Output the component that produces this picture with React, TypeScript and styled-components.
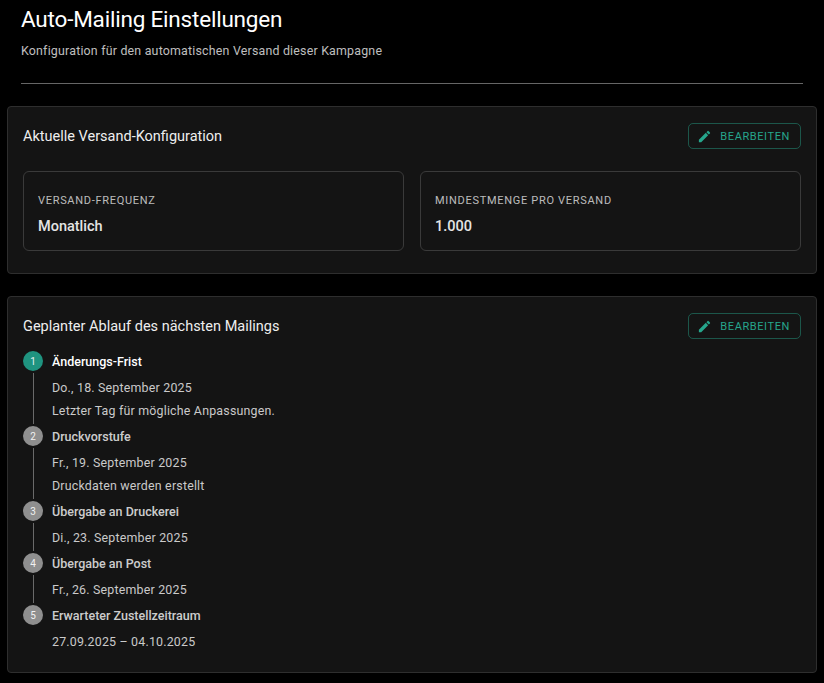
import React from "react";
import styled, { createGlobalStyle } from "styled-components";

const Global = createGlobalStyle`
  html, body { margin: 0; background: #000; }
  body { font-family: Roboto, "Liberation Sans", sans-serif; color: #fff; }
`;

const Page = styled.div`
  padding: 0 7px 8px 7px;
  display: flex;
  flex-direction: column;
  gap: 22px;
`;

const Header = styled.div`
  padding: 4px 14px 0 14px;
`;

const Title = styled.h1`
  margin: 0;
  font-size: 22.5px;
  font-weight: 400;
  line-height: 30px;
  letter-spacing: -0.2px;
`;

const Subtitle = styled.p`
  margin: 9px 0 0 0;
  font-size: 12.4px;
  color: rgba(255,255,255,0.75);
  letter-spacing: 0.2px;
`;

const Divider = styled.hr`
  margin: 25px 0 0 0;
  border: 0;
  border-top: 1px solid rgba(255,255,255,0.4);
`;

const Card = styled.section<{ $bottom: number }>`
  background: #141414;
  border: 1px solid #2e2e2e;
  border-radius: 4px;
  padding: 16px 15px ${p => p.$bottom}px;
`;

const CardHead = styled.div`
  display: flex;
  justify-content: space-between;
  align-items: center;
  min-height: 26px;
`;

const CardTitle = styled.h2`
  margin: 0;
  font-size: 14.5px;
  font-weight: 400;
  color: #eee;
`;

const EditButton = styled.button`
  display: flex;
  align-items: center;
  gap: 8px;
  height: 26px;
  padding: 0 10px 0 8px;
  background: transparent;
  border: 1px solid rgba(38,166,140,0.45);
  border-radius: 5px;
  color: #26a68c;
  font-family: inherit;
  font-size: 11px;
  letter-spacing: 0.6px;
`;

const Grid = styled.div`
  margin-top: 22px;
  display: grid;
  grid-template-columns: 1fr 1fr;
  gap: 16px;
`;

const InfoBox = styled.div`
  border: 1px solid #3a3a3a;
  border-radius: 6px;
  padding: 22px 14px 16px;
  height: 80px;
  box-sizing: border-box;
`;

const Label = styled.div`
  font-size: 11px;
  letter-spacing: 0.7px;
  color: rgba(255,255,255,0.72);
`;

const Value = styled.div`
  margin-top: 11px;
  font-size: 14.5px;
  font-weight: 500;
  color: #e4e4e4;
`;

const Steps = styled.div`
  margin-top: 10px;
  display: flex;
  flex-direction: column;
`;

const StepHead = styled.div`
  display: flex;
  align-items: center;
  gap: 9px;
  height: 24px;
`;

const Dot = styled.div<{ $active?: boolean }>`
  width: 20px;
  height: 20px;
  border-radius: 50%;
  background: ${p => (p.$active ? "#1f9480" : "#8f8f8f")};
  color: rgba(255,255,255,0.9);
  font-size: 10px;
  display: flex;
  align-items: center;
  justify-content: center;
`;

const StepLabel = styled.div<{ $active?: boolean }>`
  font-size: 12.5px;
  font-weight: 500;
  color: ${p => (p.$active ? "#fff" : "rgba(255,255,255,0.8)")};
`;

const StepBody = styled.div<{ $line?: boolean }>`
  margin-left: 10px;
  padding: 6px 0 5px 18px;
  border-left: 1px solid ${p => (p.$line ? "#6a6a6a" : "transparent")};
  display: flex;
  flex-direction: column;
  gap: 6px;
  font-size: 12.4px;
  color: rgba(255,255,255,0.78);
  line-height: 17px;
  letter-spacing: 0.2px;
`;

const Pencil = () => (
  <svg width="15" height="15" viewBox="0 0 24 24" fill="#26a68c">
    <path d="M3 17.25V21h3.75L17.81 9.94l-3.75-3.75L3 17.25zM20.71 7.04a.996.996 0 0 0 0-1.41l-2.34-2.34a.996.996 0 0 0-1.41 0l-1.830 1.83 3.75 3.75 1.83-1.83z" />
  </svg>
);

const steps = [
  { t: "Änderungs-Frist", lines: ["Do., 18. September 2025", "Letzter Tag für mögliche Anpassungen."] },
  { t: "Druckvorstufe", lines: ["Fr., 19. September 2025", "Druckdaten werden erstellt"] },
  { t: "Übergabe an Druckerei", lines: ["Di., 23. September 2025"] },
  { t: "Übergabe an Post", lines: ["Fr., 26. September 2025"] },
  { t: "Erwarteter Zustellzeitraum", lines: ["27.09.2025 – 04.10.2025"] },
];

export default function App() {
  return (
    <>
      <Global />
      <Page>
        <Header>
          <Title>Auto-Mailing Einstellungen</Title>
          <Subtitle>Konfiguration für den automatischen Versand dieser Kampagne</Subtitle>
          <Divider />
        </Header>
        <Card $bottom={22}>
          <CardHead>
            <CardTitle>Aktuelle Versand-Konfiguration</CardTitle>
            <EditButton><Pencil />BEARBEITEN</EditButton>
          </CardHead>
          <Grid>
            <InfoBox><Label>VERSAND-FREQUENZ</Label><Value>Monatlich</Value></InfoBox>
            <InfoBox><Label>MINDESTMENGE PRO VERSAND</Label><Value>1.000</Value></InfoBox>
          </Grid>
        </Card>
        <Card $bottom={17}>
          <CardHead>
            <CardTitle>Geplanter Ablauf des nächsten Mailings</CardTitle>
            <EditButton><Pencil />BEARBEITEN</EditButton>
          </CardHead>
          <Steps>
            {steps.map((s, i) => (
              <div key={i}>
                <StepHead>
                  <Dot $active={i === 0}>{i + 1}</Dot>
                  <StepLabel $active={i === 0}>{s.t}</StepLabel>
                </StepHead>
                <StepBody $line={i < steps.length - 1}>
                  {s.lines.map((l, j) => <div key={j}>{l}</div>)}
                </StepBody>
              </div>
            ))}
          </Steps>
        </Card>
      </Page>
    </>
  );
}
